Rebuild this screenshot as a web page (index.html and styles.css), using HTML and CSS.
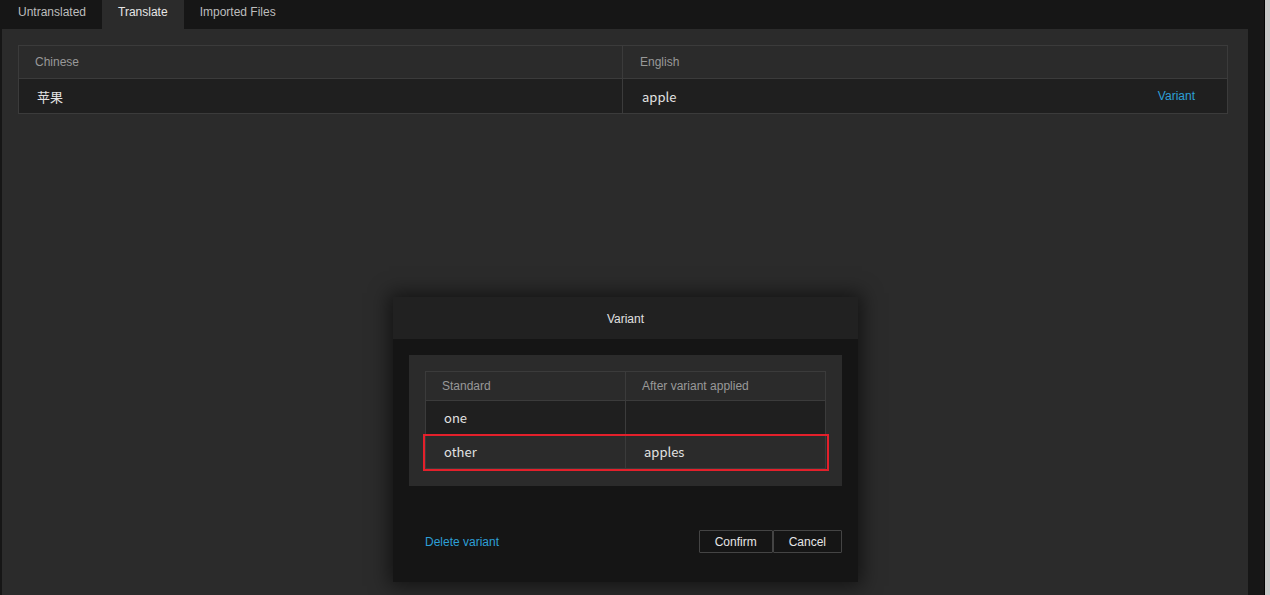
FILE: index.html
```html
<!DOCTYPE html>
<html>
<head>
<meta charset="utf-8">
<link rel="stylesheet" href="styles.css">
</head>
<body>
<div class="app">
  <div class="tabs">
    <div class="tab">Untranslated</div>
    <div class="tab active">Translate</div>
    <div class="tab">Imported Files</div>
  </div>
  <div class="panel">
    <div class="grid-table">
      <div class="row head">
        <div class="cell">Chinese</div>
        <div class="cell">English</div>
      </div>
      <div class="row body">
        <div class="cell zh">苹果</div>
        <div class="cell split"><span>apple</span><a class="link">Variant</a></div>
      </div>
    </div>
  </div>
</div>
<div class="scrollbar"><div class="sb-line"></div><div class="sb-track"></div></div>

<div class="modal">
  <div class="modal-title">Variant</div>
  <div class="modal-body">
    <div class="inner">
      <div class="vtable">
        <div class="vrow vhead">
          <div class="vcell">Standard</div>
          <div class="vcell">After variant applied</div>
        </div>
        <div class="vrow vone">
          <div class="vcell val">one</div>
          <div class="vcell val"></div>
        </div>
        <div class="vrow vother">
          <div class="vcell val">other</div>
          <div class="vcell val">apples</div>
        </div>
        <div class="highlight"></div>
      </div>
    </div>
    <div class="footer">
      <a class="link">Delete variant</a>
      <div class="buttons">
        <button class="btn">Confirm</button>
        <button class="btn">Cancel</button>
      </div>
    </div>
  </div>
</div>
</body>
</html>
```
FILE: styles.css
```css
html, body {
  margin: 0;
  padding: 0;
}
body {
  width: 1270px;
  height: 595px;
  overflow: hidden;
  background: #161616;
  display: flex;
  font-family: "Liberation Sans", Arial, sans-serif;
  font-size: 12px;
  color: #dcdcdc;
  position: relative;
}
.app {
  flex: 1;
  display: flex;
  flex-direction: column;
  min-width: 0;
}
.tabs {
  height: 29px;
  display: flex;
  padding-left: 2px;
}
.tab {
  padding: 0 16px;
  line-height: 25px;
  color: #bdbdbd;
}
.tab.active {
  background: #2b2b2b;
  color: #e6e6e6;
}
.panel {
  flex: 1;
  margin: 0 16px 0 2px;
  background: #2b2b2b;
  padding: 16px 20px 0 16px;
}
.grid-table {
  border: 1px solid #3b3b3b;
}
.row {
  display: grid;
  grid-template-columns: 603px 1fr;
}
.row.head {
  height: 32px;
  border-bottom: 1px solid #3b3b3b;
}
.row.body {
  height: 34px;
  background: #1f1f1f;
}
.cell {
  display: flex;
  align-items: center;
  padding: 0 16px;
}
.cell + .cell {
  border-left: 1px solid #3b3b3b;
  padding-left: 17px;
}
.head .cell {
  color: #999;
}
.body .cell {
  font-family: "Noto Sans CJK SC", "Noto Sans", sans-serif;
  font-size: 13px;
  color: #e2e2e2;
  padding-left: 18px;
}
.body .cell.split {
  justify-content: space-between;
  padding-right: 32px;
  padding-left: 19px;
}
.body .cell .link {
  font-family: "Liberation Sans", Arial, sans-serif;
  font-size: 12px;
}
.link {
  color: #2d9fd6;
  cursor: pointer;
}
.scrollbar {
  width: 6px;
  display: flex;
}
.sb-line {
  width: 1px;
  background: #050505;
}
.sb-track {
  flex: 1;
  background: #c9c9c9;
}

.modal {
  position: absolute;
  left: 393px;
  top: 297px;
  width: 465px;
  height: 285px;
  background: #151515;
  box-shadow: 0 0 18px 4px rgba(0, 0, 0, 0.55);
  display: flex;
  flex-direction: column;
}
.modal-title {
  height: 42px;
  box-sizing: border-box;
  padding-top: 2px;
  background: #212121;
  display: flex;
  align-items: center;
  justify-content: center;
  color: #e0e0e0;
}
.modal-body {
  padding: 16px;
  flex: 1;
  display: flex;
  flex-direction: column;
}
.inner {
  background: #2b2b2b;
  padding: 16px 16px 17px;
}
.vtable {
  border: 1px solid #3b3b3b;
  position: relative;
}
.vrow {
  display: grid;
  grid-template-columns: 199px 1fr;
}
.vhead {
  height: 28px;
  border-bottom: 1px solid #3b3b3b;
}
.vone {
  height: 33px;
  background: #1f1f1f;
  border-bottom: 1px solid #3b3b3b;
}
.vother {
  height: 33px;
  background: #2b2b2b;
}
.vcell {
  display: flex;
  align-items: center;
  padding: 0 16px;
  color: #999;
}
.vcell + .vcell {
  border-left: 1px solid #3b3b3b;
}
.vcell.val {
  font-family: "Noto Sans CJK SC", "Noto Sans", sans-serif;
  font-size: 13px;
  color: #e2e2e2;
  padding-left: 18px;
}
.highlight {
  position: absolute;
  left: -3px;
  top: 62px;
  width: 402px;
  height: 33px;
  border: 2px solid #e3202b;
}
.footer {
  margin-top: 44px;
  display: flex;
  align-items: center;
  justify-content: space-between;
  padding-left: 16px;
}
.buttons {
  display: flex;
}
.btn {
  height: 23px;
  background: #151515;
  border: 1px solid #444;
  color: #e6e6e6;
  font-family: "Liberation Sans", Arial, sans-serif;
  font-size: 12px;
  padding: 0 15px;
  border-radius: 1px;
}
```
